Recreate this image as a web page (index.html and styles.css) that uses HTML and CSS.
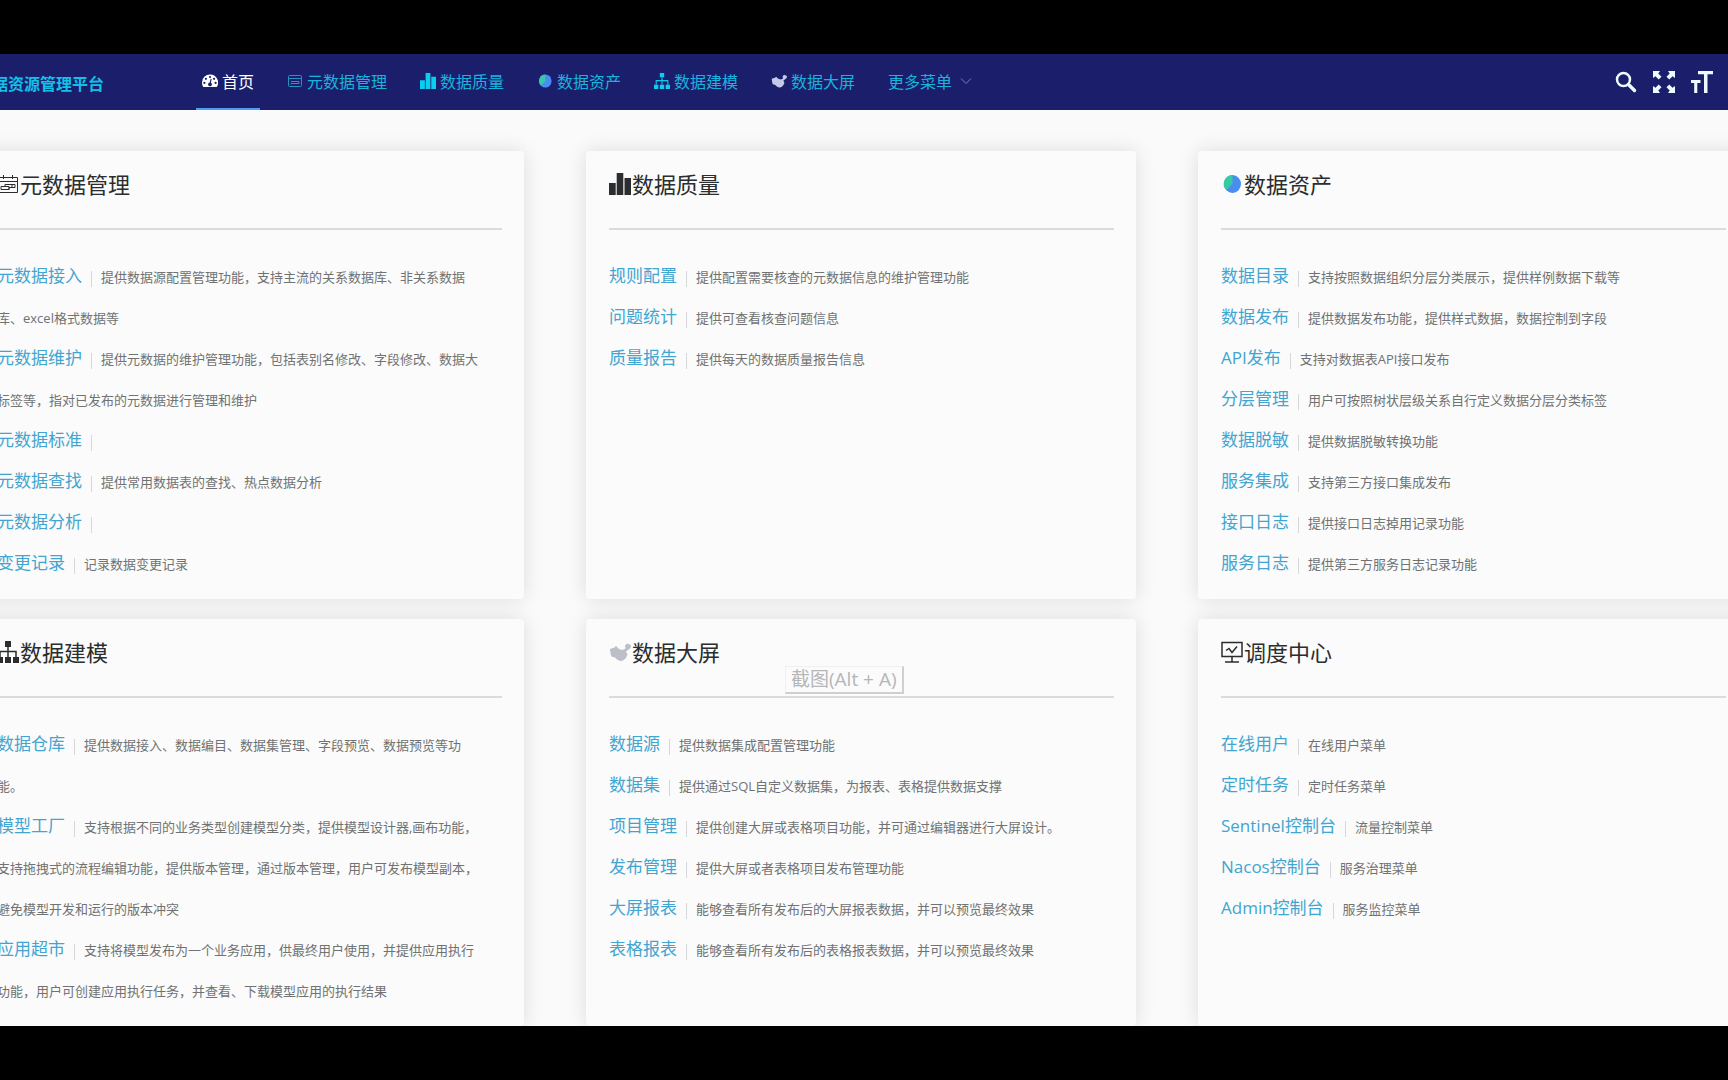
FILE: index.html
```html
<!DOCTYPE html>
<html lang="zh-CN">
<head>
<meta charset="utf-8">
<meta name="viewport" content="width=device-width, initial-scale=1">
<title>数据资源管理平台</title>
<link rel="stylesheet" href="styles.css">
</head>
<body>
<svg class="sprite" aria-hidden="true">
  <symbol id="i-gauge" viewBox="0 0 16 16">
    <path fill="currentColor" fill-rule="evenodd" d="M8 1.500a8 8 0 0 0-8 8c0 1.700.5 3.200 1.300 4.500h13.400A8 8 0 0 0 8 1.500zM8 2.900a1.100 1.100 0 1 1 0 2.200 1.100 1.100 0 0 1 0-2.200zM3.900 4.700a1.100 1.100 0 1 1 0 2.200 1.100 1.100 0 0 1 0-2.200zM12.100 4.700a1.100 1.100 0 1 1 0 2.200 1.100 1.100 0 0 1 0-2.200zM2.400 8.800a1.100 1.100 0 1 1 0 2.200 1.100 1.100 0 0 1 0-2.200zM13.600 8.800a1.100 1.100 0 1 1 0 2.200 1.100 1.100 0 0 1 0-2.200zM8.600 5.800l1 .3-.7 3.600a1.900 1.900 0 1 1-1.200-.2z"/>
  </symbol>
  <symbol id="i-meta" viewBox="0 0 22 22">
    <g fill="none" stroke="currentColor"><path d="M1.500 4.500h19v15h-19zM1.500 8.500h19M6.500 2v4M15.500 2v4M4 16.500v-3h4v-2h10v3h-6v2H4M8 13.500h4v3M15 11.500v3"/></g>
  </symbol>
  <symbol id="i-meta-nav" viewBox="0 0 16 16">
    <g fill="none" stroke="currentColor"><rect x="1.500" y="2.500" width="13" height="11" rx="1"/><path d="M1.500 5.500h13M4 8.500h8v2H8M4 11.500v-1h4"/></g>
  </symbol>
  <symbol id="i-bars" viewBox="0 0 22 22">
    <path fill="currentColor" d="M0 10h6.700v12H0zM7.700 0h6.600v22H7.700zM15.500 5H22v17h-6.500z"/>
  </symbol>
  <symbol id="i-pie" viewBox="0 0 22 22">
    <ellipse cx="11.500" cy="11" rx="8.500" ry="9" fill="#4a8df0"/>
    <path fill="#35c9a6" d="M11.500 2v9l-6.200 6.300A9 9 0 0 1 11.500 2z"/>
  </symbol>
  <symbol id="i-tree" viewBox="0 0 22 22">
    <path fill="currentColor" d="M8 0h6v6H8zM0 16h6v6H0zM8 16h6v6H8zM16 16h6v6h-6z"/>
    <path fill="none" stroke="currentColor" stroke-width="1.500" d="M11 6v10M3 16v-5.500h16V16"/>
  </symbol>
  <symbol id="i-map" viewBox="0 0 22 22">
    <path fill="currentColor" d="M1 8l4.500-1.500L7 5l3 3 3.500 1 3-1.500-.5-3 2-2 4 1.500-.5 3-2.500 2-2 1.500 1.500 3-1.500 3.500-3 2.500-3 .5-3-1.500-2-2-3.500-1-1-3z"/>
  </symbol>
  <symbol id="i-monitor" viewBox="0 0 22 22">
    <g fill="none" stroke="currentColor" stroke-width="1.500"><path d="M1 1.500h20v14H1zM11 15.500v5.500M4 21h14M5 9.500l3-2 3 4 5-6"/></g>
  </symbol>
  <symbol id="i-chevron" viewBox="0 0 12 12">
    <path fill="none" stroke="currentColor" d="M1 3.500l5 5 5-5"/>
  </symbol>
  <symbol id="i-search" viewBox="0 0 22 22">
    <g fill="none" stroke="currentColor"><circle cx="8.500" cy="8.500" r="6.500" stroke-width="2.500"/><path stroke-width="3.500" stroke-linecap="round" d="M14 14l5.500 5.500"/></g>
  </symbol>
  <symbol id="i-full" viewBox="0 0 22 22">
    <path fill="currentColor" d="M0 0h7L5.300 2.500 8.500 5.700 5.700 8.500 2.500 5.300 0 7zM22 0v7l-2.500-1.700-3.200 3.200-2.800-2.800 3.200-3.200L15 0zM0 22v-7l2.500 1.700 3.200-3.200 2.800 2.800-3.200 3.200L7 22zM22 22h-7l1.700-2.500-3.200-3.200 2.800-2.800 3.200 3.200L22 15z"/>
  </symbol>
  <symbol id="i-size" viewBox="0 0 22 22">
    <path fill="currentColor" d="M7 0h15v3.300h-5.500V22H13V3.300H7zM0 9h9.500v3H6.300v10H3.200V12H0z"/>
  </symbol>
</svg>

<div class="app">
  <header class="topbar">
    <strong class="brand">据资源管理平台</strong>
    <nav class="nav">
      <a class="nav-item active" href="#"><svg class="ico"><use href="#i-gauge"/></svg>首页</a>
      <a class="nav-item" href="#"><svg class="ico ico-dim"><use href="#i-meta-nav"/></svg>元数据管理</a>
      <a class="nav-item" href="#"><svg class="ico"><use href="#i-bars"/></svg>数据质量</a>
      <a class="nav-item" href="#"><svg class="ico"><use href="#i-pie"/></svg>数据资产</a>
      <a class="nav-item" href="#"><svg class="ico"><use href="#i-tree"/></svg>数据建模</a>
      <a class="nav-item" href="#"><svg class="ico ico-map"><use href="#i-map"/></svg>数据大屏</a>
      <a class="nav-item" href="#">更多菜单<svg class="chevron"><use href="#i-chevron"/></svg></a>
    </nav>
    <div class="tools">
      <button class="tool" type="button" aria-label="搜索"><svg><use href="#i-search"/></svg></button>
      <button class="tool" type="button" aria-label="全屏"><svg><use href="#i-full"/></svg></button>
      <button class="tool" type="button" aria-label="字号"><svg><use href="#i-size"/></svg></button>
    </div>
  </header>

  <main class="board">
    <section class="card">
      <h2 class="card-title"><svg><use href="#i-meta"/></svg>元数据管理</h2>
      <ul class="list">
        <li><a href="#">元数据接入</a><i class="bar"></i>提供数据源配置管理功能，支持主流的关系数据库、非关系数据<br>库、excel格式数据等</li>
        <li><a href="#">元数据维护</a><i class="bar"></i>提供元数据的维护管理功能，包括表别名修改、字段修改、数据大<br>标签等，指对已发布的元数据进行管理和维护</li>
        <li><a href="#">元数据标准</a><i class="bar"></i></li>
        <li><a href="#">元数据查找</a><i class="bar"></i>提供常用数据表的查找、热点数据分析</li>
        <li><a href="#">元数据分析</a><i class="bar"></i></li>
        <li><a href="#">变更记录</a><i class="bar"></i>记录数据变更记录</li>
      </ul>
    </section>

    <section class="card">
      <h2 class="card-title"><svg><use href="#i-bars"/></svg>数据质量</h2>
      <ul class="list">
        <li><a href="#">规则配置</a><i class="bar"></i>提供配置需要核查的元数据信息的维护管理功能</li>
        <li><a href="#">问题统计</a><i class="bar"></i>提供可查看核查问题信息</li>
        <li><a href="#">质量报告</a><i class="bar"></i>提供每天的数据质量报告信息</li>
      </ul>
    </section>

    <section class="card">
      <h2 class="card-title"><svg><use href="#i-pie"/></svg>数据资产</h2>
      <ul class="list">
        <li><a href="#">数据目录</a><i class="bar"></i>支持按照数据组织分层分类展示，提供样例数据下载等</li>
        <li><a href="#">数据发布</a><i class="bar"></i>提供数据发布功能，提供样式数据，数据控制到字段</li>
        <li><a href="#">API发布</a><i class="bar"></i>支持对数据表API接口发布</li>
        <li><a href="#">分层管理</a><i class="bar"></i>用户可按照树状层级关系自行定义数据分层分类标签</li>
        <li><a href="#">数据脱敏</a><i class="bar"></i>提供数据脱敏转换功能</li>
        <li><a href="#">服务集成</a><i class="bar"></i>支持第三方接口集成发布</li>
        <li><a href="#">接口日志</a><i class="bar"></i>提供接口日志掉用记录功能</li>
        <li><a href="#">服务日志</a><i class="bar"></i>提供第三方服务日志记录功能</li>
      </ul>
    </section>

    <section class="card">
      <h2 class="card-title"><svg><use href="#i-tree"/></svg>数据建模</h2>
      <ul class="list">
        <li><a href="#">数据仓库</a><i class="bar"></i>提供数据接入、数据编目、数据集管理、字段预览、数据预览等功<br>能。</li>
        <li><a href="#">模型工厂</a><i class="bar"></i>支持根据不同的业务类型创建模型分类，提供模型设计器,画布功能，<br>支持拖拽式的流程编辑功能，提供版本管理，通过版本管理，用户可发布模型副本，<br>避免模型开发和运行的版本冲突</li>
        <li><a href="#">应用超市</a><i class="bar"></i>支持将模型发布为一个业务应用，供最终用户使用，并提供应用执行<br>功能，用户可创建应用执行任务，并查看、下载模型应用的执行结果</li>
      </ul>
    </section>

    <section class="card">
      <h2 class="card-title"><svg class="ico-grey"><use href="#i-map"/></svg>数据大屏</h2>
      <ul class="list">
        <li><a href="#">数据源</a><i class="bar"></i>提供数据集成配置管理功能</li>
        <li><a href="#">数据集</a><i class="bar"></i>提供通过SQL自定义数据集，为报表、表格提供数据支撑</li>
        <li><a href="#">项目管理</a><i class="bar"></i>提供创建大屏或表格项目功能，并可通过编辑器进行大屏设计。</li>
        <li><a href="#">发布管理</a><i class="bar"></i>提供大屏或者表格项目发布管理功能</li>
        <li><a href="#">大屏报表</a><i class="bar"></i>能够查看所有发布后的大屏报表数据，并可以预览最终效果</li>
        <li><a href="#">表格报表</a><i class="bar"></i>能够查看所有发布后的表格报表数据，并可以预览最终效果</li>
      </ul>
      <span class="tip" role="tooltip">截图(Alt + A)</span>
    </section>

    <section class="card">
      <h2 class="card-title"><svg><use href="#i-monitor"/></svg>调度中心</h2>
      <ul class="list">
        <li><a href="#">在线用户</a><i class="bar"></i>在线用户菜单</li>
        <li><a href="#">定时任务</a><i class="bar"></i>定时任务菜单</li>
        <li><a href="#">Sentinel控制台</a><i class="bar"></i>流量控制菜单</li>
        <li><a href="#">Nacos控制台</a><i class="bar"></i>服务治理菜单</li>
        <li><a href="#">Admin控制台</a><i class="bar"></i>服务监控菜单</li>
      </ul>
    </section>
  </main>
</div>
</body>
</html>
```
FILE: styles.css
```css
* {
  box-sizing: border-box;
}

body {
  margin: 0;
  height: 100vh;
  padding: 54px 0;
  background: #000;
  overflow: hidden;
  font-family: "Open Sans", "Noto Sans CJK SC", sans-serif;
  font-size: 13px;
  color: #707273;
}

a {
  color: inherit;
  text-decoration: none;
}

.sprite {
  display: none;
}

.app {
  display: flex;
  flex-direction: column;
  height: 100%;
  overflow: hidden;
  background: #fafafa;
}

/* Top bar */
.topbar {
  display: flex;
  flex: none;
  align-items: stretch;
  height: 56px;
  padding-right: 15px;
  background: #1b1f6b;
  color: #19b4dd;
  font-size: 16px;
}

.brand {
  display: flex;
  align-items: center;
  margin-left: -8px;
  margin-right: 92px;
  padding-top: 2px;
  color: #12c0e8;
  white-space: nowrap;
}

.nav {
  display: flex;
  gap: 21px;
}

.nav-item {
  display: flex;
  align-items: center;
  gap: 4px;
  padding: 0 6px;
  border-bottom: 2px solid transparent;
  white-space: nowrap;
}

.nav-item.active {
  color: #fff;
  border-bottom-color: #4f9df5;
}

.ico {
  width: 16px;
  height: 16px;
  color: #0ccdf0;
}

.active .ico {
  color: #fff;
}

.ico-dim {
  color: #2593c4;
}

.ico-map {
  color: #c3c9e6;
}

.chevron {
  width: 12px;
  height: 12px;
  margin-left: 4px;
  color: #7481b5;
}

.tools {
  display: flex;
  align-items: center;
  gap: 16px;
  margin-left: auto;
}

.tool {
  display: flex;
  padding: 0;
  border: 0;
  background: none;
  color: #eefaff;
}

.tool svg {
  width: 22px;
  height: 22px;
}

/* Cards */
.board {
  display: grid;
  grid-template-columns: repeat(3, minmax(0, 1fr));
  gap: 20px 62px;
  margin: 0 -20px 0 -26px;
  padding-top: 41px;
}

.card {
  position: relative;
  padding: 17px 22px 14px 23px;
  border-radius: 4px;
  background: #fafbfa;
  box-shadow: 0 0 20px rgba(0, 0, 0, 0.12);
}

.card-title {
  display: flex;
  align-items: center;
  gap: 1px;
  margin: 0;
  padding-bottom: 28px;
  border-bottom: 2px solid #d9dbdc;
  color: #2b2d2e;
  font-size: 22px;
  font-weight: 400;
  line-height: 32px;
}

.card-title svg {
  width: 22px;
  height: 22px;
}

.card-title .ico-grey {
  color: #bcbec8;
}

.list {
  margin: 0;
  padding: 27px 0 0;
  list-style: none;
  line-height: 41px;
}

.list li {
  min-height: 41px;
}

.list a {
  color: #42a5d1;
  font-size: 17px;
  line-height: 24px;
}

.bar {
  display: inline-block;
  width: 1px;
  height: 16px;
  margin: 0 9px;
  background: #d5d7d8;
  vertical-align: middle;
}

.tip {
  position: absolute;
  top: 47px;
  left: 199px;
  padding: 0 5px;
  border: solid #f0f0f0;
  border-width: 1px 2px 2px 1px;
  border-right-color: #cfcfcf;
  border-bottom-color: #cfcfcf;
  background: #fafbfa;
  color: #b4b6b7;
  font-size: 19px;
  line-height: 25px;
  white-space: nowrap;
}
```
